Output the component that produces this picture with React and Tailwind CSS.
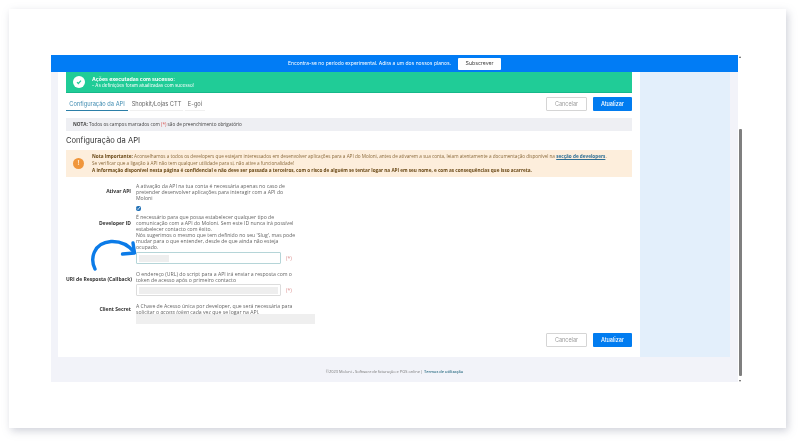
const sans = "font-['Open_Sans',sans-serif]";

const Buttons = () => (
  <div className="flex gap-[6px]">
    <button className="h-[14px] w-[41px] rounded-[1px] border border-[#d5d5d5] bg-white text-[5.5px] text-[#9a9a9a]">Cancelar</button>
    <button className="h-[14px] w-[39px] rounded-[1px] bg-[#017cf0] text-[5.5px] font-medium text-white">Atualizar</button>
  </div>
);

const Row = ({ label, labelClass, children }) => (
  <div className="flex">
    <div className={`w-[65px] shrink-0 whitespace-nowrap text-right text-[5px] font-bold leading-[6px] text-[#333] ${labelClass}`}>{label}</div>
    <div className="ml-[5px] text-[5.15px] leading-[6px] text-[#666]">{children}</div>
  </div>
);

const Field = ({ children, className }) => (
  <div className={`flex items-center ${className}`}>
    {children}
    <span className="ml-[5px] text-[5px] text-[#d98a8a]">(*)</span>
  </div>
);

export default function App() {
  return (
    <div className="h-[442px] w-[800px] overflow-hidden bg-white pl-[9px] pt-[9px] font-['Inter',sans-serif]">
      <div className="flex h-[419px] w-[777px] bg-white pl-[42px] pt-[46px] shadow-[2px_3px_8px_rgba(120,125,150,0.35)] blur-[0.3px]">
        <div className="flex h-[327px] w-[687px] flex-col bg-[#f2f3f9]">
          <div className="flex h-[17px] shrink-0 items-center justify-center bg-[#017cf5] text-[5px] text-white">
            <span>Encontra-se no período experimental. Adira a um dos nossos planos.</span>
            <span className="ml-[7px] flex h-[12px] w-[43px] items-center justify-center rounded-[1px] bg-white text-[5.2px] text-[#444]">Subscrever</span>
          </div>

          <div className="flex pl-[7px]">
            <div className="relative h-[285px] w-[582px] bg-white px-[8px]">
              <div className="flex h-[21px] items-center border-b border-[#16b88a] bg-[#20cc97] pl-[7px] text-white">
                <div className="flex h-[12px] w-[12px] items-center justify-center rounded-full bg-white">
                  <svg viewBox="0 0 12 12" className="h-[8px] w-[8px]" fill="none" stroke="#20cc97" strokeWidth="1.8"><path d="M3 6.3l2 2 4-4.3" /></svg>
                </div>
                <div className="ml-[7px]">
                  <p className="text-[5.2px] font-bold leading-[7px]">Ações executadas com sucesso:</p>
                  <p className="text-[4.5px] leading-[6px]">- As definições foram atualizadas com sucesso!</p>
                </div>
              </div>

              <div className="mt-[4px] flex items-start justify-between">
                <div className="flex text-[5.7px] leading-[13px] text-[#666]">
                  <span className="w-[62px] border-b border-[#2c7fa8] text-center text-[#3f8bb0]">Configuração da API</span>
                  <span className="ml-[2px] w-[53px] border-b border-[#f0f0f0] text-center">Shopkit/Lojas CTT</span>
                  <span className="ml-[2px] w-[20px] border-b border-[#f0f0f0] text-center">E-goi</span>
                </div>
                <Buttons />
              </div>

              <div className={`mt-[7px] flex h-[13px] items-center bg-[#eeeff3] pl-[7px] text-[4.68px] text-[#444] ${sans}`}>
                <span><b>NOTA:</b> Todos os campos marcados com <span className="text-[#d9534f]">(*)</span> são de preenchimento obrigatório</span>
              </div>

              <h2 className="mt-[3px] text-[7.6px] leading-[14px] text-[#333]">Configuração da API</h2>

              <div className={`mt-[2px] flex h-[27px] items-center bg-[#fdeedc] pl-[7px] ${sans}`}>
                <div className="flex h-[11px] w-[11px] shrink-0 items-center justify-center rounded-full bg-[#f0963c] text-[7px] font-bold text-[#fde4c8]">!</div>
                <div className="ml-[8px] whitespace-nowrap text-[4.68px] leading-[6.8px] text-[#8a6a3c]">
                  <p><b className="text-[#6b4a18]">Nota Importante:</b> Aconselhamos a todos os developers que estejam interessados em desenvolver aplicações para a API do Moloni, antes de ativarem a sua conta, leiam atentamente a documentação disponível na <u className="font-bold text-[#2f6f95]">secção de developers</u>.</p>
                  <p>Se verificar que a ligação à API não tem qualquer utilidade para si, não ative a funcionalidade!</p>
                  <p className="font-bold text-[#6b4a18]">A informação disponível nesta página é confidencial e não deve ser passada a terceiros, com o risco de alguém se tentar logar na API em seu nome, e com as consequências que isso acarreta.</p>
                </div>
              </div>

              <div className={`relative mt-[6px] ${sans}`}>
                <Row label="Ativar API" labelClass="pt-[5px]">
                  <p className="w-[160px]">A ativação da API na tua conta é necessária apenas no caso de pretender desenvolver aplicações para interagir com a API do Moloni</p>
                  <input type="checkbox" defaultChecked readOnly className="mt-[5px] block h-[5px] w-[5px] accent-[#1f6fb5]" />
                </Row>
                <div className="mt-[3px]">
                  <Row label="Developer ID" labelClass="pt-[6px]">
                    <p className="w-[160px]">É necessário para que possa estabelecer qualquer tipo de comunicação com a API do Moloni. Sem este ID nunca irá possível estabelecer contacto com êxito.<br />Nós sugerimos o mesmo que tem definido no seu 'Slug', mas pode mudar para o que entender, desde de que ainda não esteja ocupado.</p>
                    <Field className="mt-[2px]">
                      <div className="flex h-[12px] w-[145px] items-center rounded-[1px] border border-[#b5d5d8] bg-white pl-[2px]">
                        <div className="h-[7px] w-[30px] bg-[#eeeeee]" />
                      </div>
                    </Field>
                  </Row>
                </div>
                <div className="mt-[7px]">
                  <Row label="URI de Resposta (Callback)" labelClass="pt-[5px]">
                    <p className="w-[160px]">O endereço (URL) do script para a API irá enviar a resposta com o token de acesso após o primeiro contacto</p>
                    <Field className="mt-[1px]">
                      <div className="flex h-[12px] w-[145px] items-center rounded-[1px] border border-[#dcdcdc] bg-white px-[2px]">
                        <div className="h-[7px] w-full bg-[#eeeeee]" />
                      </div>
                    </Field>
                  </Row>
                </div>
                <div className="mt-[7px]">
                  <Row label="Client Secret" labelClass="pt-[3px]">
                    <p className="w-[160px]">A Chave de Acesso única por developer, que será necessária para solicitar o <i>access token</i> cada vez que se logar na API.</p>
                    <div className="-mt-[1px] h-[10px] w-[179px] bg-[#efefef]" />
                  </Row>
                </div>

                <svg viewBox="0 0 48 32" fill="none" stroke="#0b7be8" strokeWidth="3.4" strokeLinecap="round" className="absolute left-[23px] top-[56px] h-[32px] w-[48px]">
                  <path d="M6 30C1 20 4 4 22 2.5c11-.5 19 5.500 23 10.500" />
                  <path d="M44 4l1.500 10-12 1" strokeLinejoin="round" />
                </svg>
              </div>

              <div className="absolute right-[8px] top-[261px]">
                <Buttons />
              </div>
            </div>
            <div className="h-[285px] w-[90px] bg-[#e3effb]" />
          </div>

          <div className={`flex flex-1 items-center justify-center pt-[4px] text-[3.95px] text-[#777] ${sans}`}>
            <span>©2023 Moloni - Software de faturação e POS online | <b className="font-semibold text-[#2f6f85]">Termos de utilização</b></span>
          </div>
        </div>

        <div className="relative h-[327px] w-[5px] bg-white">
          <div className="absolute left-[1px] top-[1px] h-0 w-0 border-x-[1.5px] border-b-[2px] border-x-transparent border-b-[#555]" />
          <div className="absolute left-[1px] top-[74px] h-[247px] w-[3px] rounded-[1px] bg-[#7f7f7f]" />
          <div className="absolute bottom-0 left-[1px] h-0 w-0 border-x-[1.5px] border-t-[2px] border-x-transparent border-t-[#555]" />
        </div>
      </div>
    </div>
  );
}
